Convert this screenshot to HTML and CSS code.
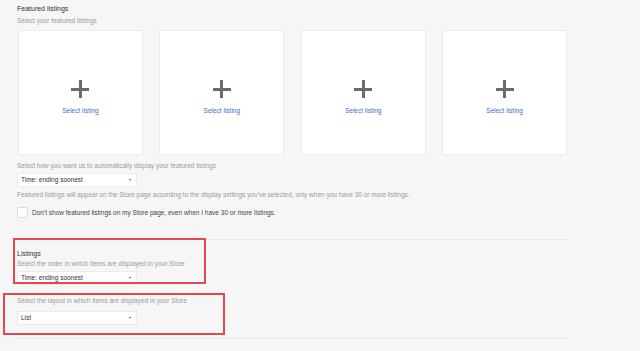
FILE: index.html
```html
<!DOCTYPE html>
<html lang="en">
<head>
    <meta charset="UTF-8">
    <meta name="viewport" content="width=device-width, initial-scale=1.0">
    <title>Store settings</title>
    <link rel="stylesheet" href="styles.css">
</head>
<body>
    <div class="page">
        <div class="title">Featured listings</div>
        <div class="hint first">Select your featured listings</div>
        <div class="cards">
            <div class="card"><span class="plus"></span><span class="pick">Select listing</span></div>
            <div class="card"><span class="plus"></span><span class="pick">Select listing</span></div>
            <div class="card"><span class="plus"></span><span class="pick">Select listing</span></div>
            <div class="card"><span class="plus"></span><span class="pick">Select listing</span></div>
        </div>
        <div class="hint auto">Select how you want us to automatically display your featured listings</div>
        <div class="dropdown">Time: ending soonest<span class="caret"></span></div>
        <div class="hint note">Featured listings will appear on the Store page according to the display settings you've selected, only when you have 30 or more listings.</div>
        <label class="check"><span class="box"></span>Don't show featured listings on my Store page, even when I have 30 or more listings.</label>

        <div class="section">
            <div class="title">Listings</div>
            <div class="hint order">Select the order in which items are displayed in your Store</div>
            <div class="dropdown">Time: ending soonest<span class="caret"></span></div>
            <div class="hint layout">Select the layout in which items are displayed in your Store</div>
            <div class="dropdown list">List<span class="caret"></span></div>
        </div>
    </div>

    <div class="mark mark-order"></div>
    <div class="mark mark-layout"></div>
</body>
</html>
```

FILE: styles.css
```css
body {
    margin: 0;
    background-color: #f6f6f6;
    font-family: "Liberation Sans", Arial, sans-serif;
    font-size: 6.5px;
    color: #333;
}

.page {
    width: 550px;
    padding: 5px 0 0 17px;
}

.title {
    font-size: 7px;
    line-height: 8px;
    color: #333;
}

.hint {
    line-height: 8px;
    color: #9a9a9a;
}

.hint.first {
    margin-top: 4px;
}

.cards {
    display: flex;
    gap: 16.5px;
    margin: 5px 0 0 1px;
}

.card {
    width: 125px;
    height: 125px;
    box-sizing: border-box;
    background-color: #fff;
    border: 1px solid #ececec;
    display: flex;
    flex-direction: column;
    align-items: center;
    padding-top: 49px;
}

.plus {
    position: relative;
    width: 18px;
    height: 18px;
}

.plus::before, .plus::after {
    content: "";
    position: absolute;
    background-color: #6b6b6b;
}

.plus::before {
    left: 0;
    top: 7.5px;
    width: 18px;
    height: 3px;
}

.plus::after {
    left: 7.5px;
    top: 0;
    width: 3px;
    height: 18px;
}

.pick {
    margin-top: 9px;
    color: #3e6ec6;
    line-height: 8px;
}

.hint.auto {
    margin-top: 7px;
}

.dropdown {
    position: relative;
    width: 120px;
    height: 14px;
    box-sizing: border-box;
    margin-top: 3px;
    padding-left: 3px;
    background-color: #fff;
    border: 1px solid #ececec;
    line-height: 12px;
    color: #333;
}

.caret {
    position: absolute;
    right: 5px;
    top: 5px;
    border-left: 1.5px solid transparent;
    border-right: 1.5px solid transparent;
    border-top: 2px solid #555;
}

.hint.note {
    margin-top: 4px;
}

.check {
    display: flex;
    align-items: center;
    gap: 4px;
    margin-top: 7px;
    height: 12px;
    color: #444;
}

.box {
    width: 11px;
    height: 11px;
    box-sizing: border-box;
    background-color: #fff;
    border: 1px solid #dcdcdc;
    border-radius: 2px;
}

.section {
    margin: 21px 0 0 -2px;
    padding: 10px 0 13px 2px;
    border-top: 1px solid #e8e8e8;
    border-bottom: 1px solid #e8e8e8;
}

.hint.order {
    margin-top: 2px;
}

.section .dropdown {
    margin-top: 3px;
}

.hint.layout {
    margin-top: 12px;
}

.section .dropdown.list {
    margin-top: 6px;
}

/* red annotation frames drawn over the page */
.mark {
    position: absolute;
    box-sizing: border-box;
    border: 2px solid #e24a4f;
}

.mark-order {
    left: 13px;
    top: 238px;
    width: 193px;
    height: 46px;
}

.mark-layout {
    left: 3px;
    top: 293px;
    width: 222px;
    height: 42px;
}
```
